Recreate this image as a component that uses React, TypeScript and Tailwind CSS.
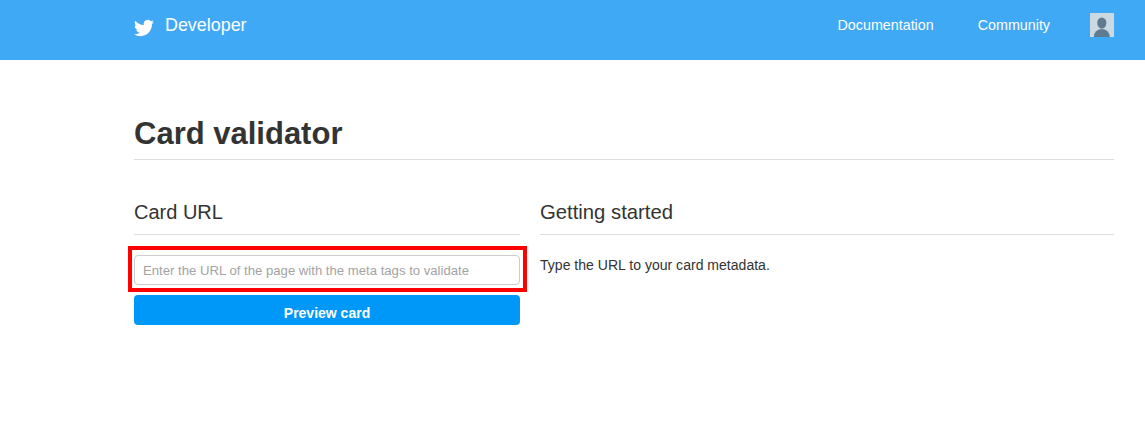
export default function App() {
  return (
    <div className="min-h-[430px] bg-white font-['Liberation_Sans',Arial,sans-serif] text-[#333333]">
      <header className="h-[60px] bg-[#3fa9f5]">
        <div className="ml-[134px] w-[980px] h-full flex items-start justify-between">
          <div className="flex items-start">
            <svg viewBox="0 0 24 24" className="w-[20px] h-[20px] mt-[18px] fill-white">
              <path d="M23.95 4.57a10 10 0 0 1-2.82.77 4.96 4.96 0 0 0 2.16-2.72c-.95.55-2 .96-3.13 1.19a4.92 4.92 0 0 0-8.38 4.48C7.69 8.1 4.07 6.13 1.64 3.16a4.82 4.82 0 0 0-.67 2.48c0 1.71.87 3.21 2.19 4.1a4.9 4.9 0 0 1-2.23-.62v.06a4.92 4.92 0 0 0 3.95 4.83 5 5 0 0 1-2.21.08 4.94 4.94 0 0 0 4.6 3.42A9.87 9.87 0 0 1 0 19.54a14 14 0 0 0 7.56 2.21c9.05 0 14-7.5 14-13.98 0-.21 0-.42-.02-.63a9.94 9.94 0 0 0 2.46-2.55z" />
            </svg>
            <span className="ml-[11px] mt-[15px] text-[17.9px] leading-[20px] text-white">Developer</span>
          </div>
          <nav className="flex items-start">
            <a className="mt-[15px] text-[14.3px] leading-[20px] text-white">Documentation</a>
            <a className="mt-[15px] ml-[44px] text-[14.3px] leading-[20px] text-white">Community</a>
            <div className="ml-[40px] mt-[13px] w-[24px] h-[24px] bg-[#ccd9e1] overflow-hidden">
              <svg viewBox="0 0 24 24" className="w-[24px] h-[24px] fill-[#5f7b92]">
                <ellipse cx="11.8" cy="10" rx="4.6" ry="5.5" />
                <ellipse cx="11.8" cy="24" rx="8" ry="8" />
              </svg>
            </div>
          </nav>
        </div>
      </header>
      <main className="ml-[134px] w-[980px]">
        <h1 className="mt-[55px] h-[45px] border-b border-[#dddddd] text-[31px] leading-[37px] font-bold">Card validator</h1>
        <div className="mt-[39px] flex gap-[20px]">
          <section className="w-[386px] relative">
            <h2 className="h-[36px] border-b border-[#dddddd] text-[20px] leading-[27px]">Card URL</h2>
            <input
              placeholder="Enter the URL of the page with the meta tags to validate"
              className="mt-[20px] block w-full h-[30px] px-[8px] text-[13.15px] border border-[#cccccc] rounded-[4px] bg-white outline-none placeholder:text-[#a3a3a3]"
            />
            <button className="mt-[10px] block w-full h-[30px] pt-[6px] rounded-[4px] bg-[#0098f8] text-[14px] font-bold text-white">Preview card</button>
            <div className="absolute left-[-6px] top-[47px] w-[399px] h-[46px] border-4 border-[#ff0000]" />
          </section>
          <section className="flex-1">
            <h2 className="h-[36px] border-b border-[#dddddd] text-[20.3px] leading-[27px]">Getting started</h2>
            <p className="mt-[20px] text-[14.05px] leading-[20px]">Type the URL to your card metadata.</p>
          </section>
        </div>
      </main>
    </div>
  );
}
